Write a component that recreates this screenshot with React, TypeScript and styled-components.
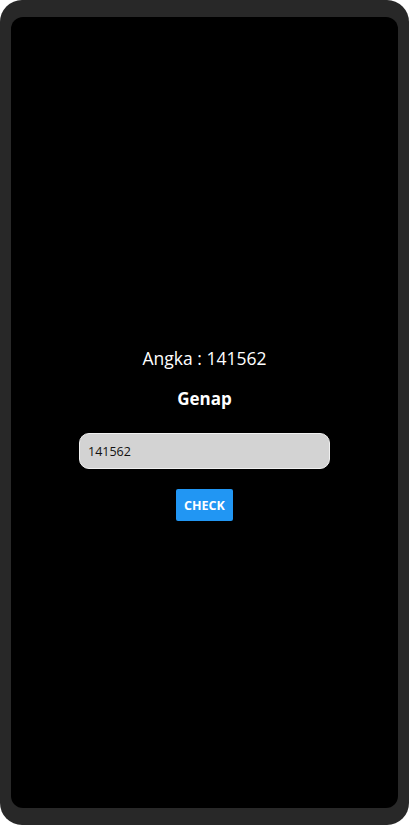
import React, { useState } from "react";
import styled, { createGlobalStyle } from "styled-components";

const Global = createGlobalStyle`
  html, body { margin: 0; padding: 0; background: #ffffff; }
  * { box-sizing: border-box; }
`;

const Frame = styled.div`
  width: 409px;
  height: 825px;
  background: #282828;
  border-radius: 22px;
  padding: 17px 11px 17px 11px;
  display: flex;
`;

const Screen = styled.div`
  flex: 1;
  background: #000;
  border-radius: 12px;
  display: flex;
  flex-direction: column;
  align-items: center;
  justify-content: center;
  padding-top: 42px;
  font-family: "Open Sans", "Noto Sans", sans-serif;
  color: #fff;
`;

const Title = styled.div`
  font-size: 17.5px;
  line-height: 24px;
  margin-bottom: 17px;
`;

const Result = styled.div`
  font-size: 17px;
  line-height: 24px;
  font-weight: 700;
  margin-bottom: 22px;
`;

const Field = styled.input`
  width: 251px;
  height: 36px;
  background: #d3d3d3;
  border: 1px solid #f0f0f0;
  border-radius: 10px;
  padding: 0 8px;
  font-family: "Open Sans", "Noto Sans", sans-serif;
  font-size: 12.5px;
  color: #111;
  outline: none;
  margin-bottom: 20px;
`;

const Button = styled.button`
  height: 32px;
  padding: 0 8px;
  background: #2196f3;
  border: none;
  border-radius: 2px;
  color: #fff;
  font-family: "Open Sans", "Noto Sans", sans-serif;
  font-size: 12.5px;
  font-weight: 700;
  text-transform: uppercase;
  cursor: pointer;
`;

export default function App() {
  const [value, setValue] = useState("141562");
  const n = parseInt(value, 10);
  return (
    <>
      <Global />
      <Frame>
        <Screen>
          <Title>Angka : 141562</Title>
          <Result>{isNaN(n) ? "Genap" : n % 2 === 0 ? "Genap" : "Ganjil"}</Result>
          <Field value={value} onChange={(e) => setValue(e.target.value)} />
          <Button>Check</Button>
        </Screen>
      </Frame>
    </>
  );
}
